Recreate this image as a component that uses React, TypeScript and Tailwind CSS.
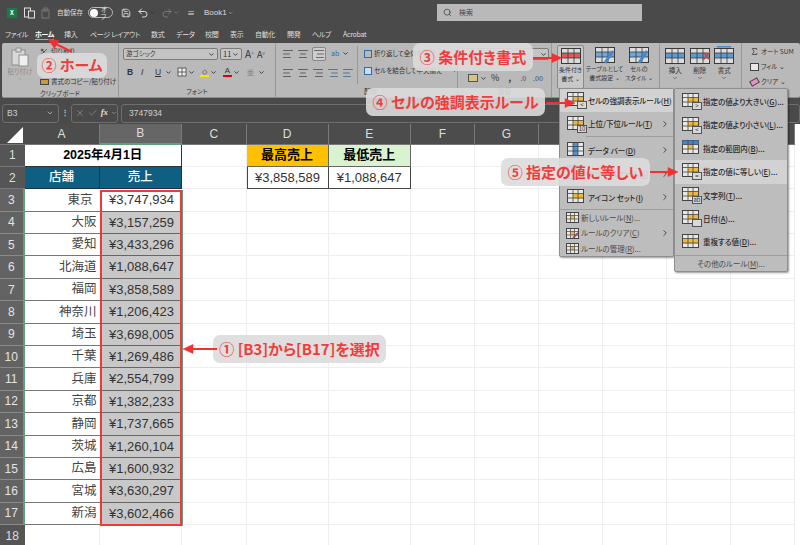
import { AlignCenter, AlignLeft, AlignRight, Check, ChevronDown, ChevronRight, Redo2, Save, Scissors, Search, Sigma, Undo2, X } from "lucide-react";

const rows = [
  ["東京", "¥3,747,934"],
  ["大阪", "¥3,157,259"],
  ["愛知", "¥3,433,296"],
  ["北海道", "¥1,088,647"],
  ["福岡", "¥3,858,589"],
  ["神奈川", "¥1,206,423"],
  ["埼玉", "¥3,698,005"],
  ["千葉", "¥1,269,486"],
  ["兵庫", "¥2,554,799"],
  ["京都", "¥1,382,233"],
  ["静岡", "¥1,737,665"],
  ["茨城", "¥1,260,104"],
  ["広島", "¥1,600,932"],
  ["宮城", "¥3,630,297"],
  ["新潟", "¥3,602,466"],
];

const tabs = [
  ["ファイル", "w-[30px]"],
  ["ホーム", "w-[29px]"],
  ["挿入", "w-[26px]"],
  ["ページ レイアウト", "w-[61px]"],
  ["数式", "w-[25px]"],
  ["データ", "w-[29px]"],
  ["校閲", "w-[25px]"],
  ["表示", "w-[25px]"],
  ["自動化", "w-[32px]"],
  ["開発", "w-[25px]"],
  ["ヘルプ", "w-[31px]"],
  ["Acrobat", "w-[30px]"],
];
const colHeads = ["A", "B", "C", "D", "E", "F", "G", "H", "I", "J", "K"];
const emptyCols = [5, 6, 7, 8, 9, 10];

function TableIcon({ kind = "yellow", tag }: { kind?: string; tag?: string }) {
  return (
    <span className="relative block w-[20px] h-[17px] shrink-0">
      <svg width="17" height="14" viewBox="0 0 17 14">
        <rect x="0.5" y="0.5" width="16" height="13" fill="#e8e8e8" stroke="#444" />
        {kind === "yellow" && <rect x="6" y="4.5" width="10" height="5" fill="#f0b93a" />}
        {kind === "blue" && <rect x="0.5" y="0.5" width="16" height="4" fill="#3c87cf" />}
        {kind === "blue" && <rect x="6" y="5" width="5" height="4" fill="#f0b93a" />}
        {kind === "bars" && <rect x="6" y="1" width="5" height="12" fill="#4d94d4" />}
        {kind === "full" && <rect x="1" y="4.5" width="15" height="5" fill="#f0b93a" />}
        <path d="M6 0.5V13.5M11 0.5V13.5M0.5 4.5H16.5M0.5 9H16.5" stroke="#444" strokeWidth="0.8" />
      </svg>
      {tag !== undefined && (
        <span className="absolute right-0 bottom-0 w-[10px] h-[8px] bg-[#d8d8d8] border border-[#555] text-[6px] leading-[6px] text-center text-[#333]">{tag}</span>
      )}
    </span>
  );
}

function SmallTable({ mark }: { mark?: string }) {
  return (
    <svg width="13" height="11" viewBox="0 0 13 11" className="block">
      <rect x="0.5" y="0.5" width="12" height="10" fill="#e8e8e8" stroke="#444" />
      <rect x="4.5" y="3.5" width="4" height="3.5" fill="#f0b93a" />
      <path d="M4.5 0.5V10.5M8.5 0.5V10.5M0.5 3.5H12.5M0.5 7H12.5" stroke="#444" strokeWidth="0.7" />
      {mark === "clear" && <path d="M7 10L12 5" stroke="#b0408a" strokeWidth="2" />}
    </svg>
  );
}

function RibbonIcon({ fill, mark }: { fill: string; mark?: string }) {
  return (
    <svg width="24" height="20" viewBox="0 0 24 20">
      <rect x="2.5" y="2.5" width="19" height="15" fill="#dcdcdc" stroke="#3a3a3a" />
      <rect x="3" y="7" width="18" height="5" fill={fill} />
      <path d="M9 2.5V17.5M15 2.5V17.5M2.5 7H21.5M2.5 12H21.5" stroke="#3a3a3a" strokeWidth="0.8" />
      {mark === "brush" && <path d="M12 18L20 6" stroke="#4a86c8" strokeWidth="3" />}
      {mark === "cross" && <path d="M15 6L22 14M22 6L15 14" stroke="#c8483c" strokeWidth="1.6" />}
      {mark === "line" && <path d="M5 0.8H19" stroke="#3c87cf" strokeWidth="1.4" />}
    </svg>
  );
}

function MenuItem({ icon, label, hot, rest = "", arrow, active }: { icon: React.ReactNode; label: string; hot: string; rest?: string; arrow?: boolean; active?: boolean }) {
  return (
    <div className={`flex items-center pl-[7px] h-[23.4px] shrink-0 ${active ? "bg-[#d2d2d2]" : ""}`}>
      <span className="w-[21px] shrink-0">{icon}</span>
      <span className="text-[7.5px] font-medium text-[#2b2b2b] whitespace-nowrap">
        {label}(<span className="underline">{hot}</span>){rest}
      </span>
      {arrow && <ChevronRight className="ml-auto mr-[3px] text-[#333]" size={10} />}
    </div>
  );
}

function SmallMenuItem({ mark, label, hot, rest = "", arrow }: { mark?: string; label: string; hot: string; rest?: string; arrow?: boolean }) {
  return (
    <div className="flex items-center pl-[6px] h-[15.4px] shrink-0">
      <span className="w-[15px] shrink-0"><SmallTable mark={mark} /></span>
      <span className="text-[7.5px] text-[#4a4a4a] whitespace-nowrap">
        {label}(<span className="underline">{hot}</span>){rest}
      </span>
      {arrow && <ChevronRight className="ml-auto mr-[3px] text-[#333]" size={10} />}
    </div>
  );
}

function Pill({ className, children }: { className: string; children: React.ReactNode }) {
  return (
    <div className={`absolute flex items-center justify-center rounded-[7px] bg-[#dcdcdc]/90 text-[15px] font-bold text-[#f23c3c] whitespace-nowrap ${className}`}>
      {children}
    </div>
  );
}

function Caret() {
  return <ChevronDown size={7} className="text-[#333] shrink-0" strokeWidth={3} />;
}

export default function App() {
  return (
    <div className="relative w-[800px] h-[545px] overflow-hidden bg-[#4a4a4a] flex flex-col [font-feature-settings:'palt'] font-['Noto_Sans_CJK_JP','Noto_Sans',sans-serif]">
      {/* title bar */}
      <div className="h-[25px] shrink-0 flex items-center text-[#dddddd] pl-[7px]">
        <span className="w-[10px] h-[10px] bg-[#1d7a45] text-white text-[6px] leading-[10px] text-center font-bold shrink-0">X</span>
        <svg width="11" height="12" viewBox="0 0 11 12" className="ml-[7px] shrink-0" fill="none" stroke="#e0e0e0">
          <rect x="0.5" y="1" width="6" height="9" />
          <rect x="4.5" y="4" width="6" height="7" fill="#4a4a4a" />
        </svg>
        <svg width="10" height="12" viewBox="0 0 10 12" className="ml-[6px] shrink-0" fill="none" stroke="#777">
          <rect x="1" y="3" width="7" height="8" />
          <rect x="3" y="1" width="3" height="3" />
        </svg>
        <span className="ml-[6px] text-[6.5px] w-[26px] shrink-0 whitespace-nowrap">自動保存</span>
        <span className="ml-[5px] w-[25px] h-[11px] shrink-0 rounded-full border border-[#bbb] flex items-center pl-[1px]">
          <span className="w-[8px] h-[8px] rounded-full bg-white" />
          <span className="ml-[3px] text-[6.5px] leading-none">オフ</span>
        </span>
        <Save size={10} className="ml-[8px] shrink-0" />
        <Undo2 size={12} className="ml-[6px] shrink-0" />
        <Caret />
        <Redo2 size={12} className="ml-[5px] shrink-0 text-[#777]" />
        <ChevronDown size={7} className="text-[#777] shrink-0" strokeWidth={3} />
        <span className="ml-[7px] text-[8px] leading-none w-[5px]">≡</span>
        <span className="ml-[12px] w-[29px] shrink-0 text-[8px] flex items-center gap-[1px] font-['Liberation_Sans',sans-serif]">
          Book1 <ChevronDown size={8} />
        </span>
        <div className="ml-[204px] w-[205px] h-[17px] shrink-0 bg-[#b9b9b9] flex items-center pl-[6px] text-[#444] mb-[1px]">
          <Search size={9} />
          <span className="ml-[7px] text-[7px]">検索</span>
        </div>
      </div>

      {/* tabs */}
      <div className="h-[18px] shrink-0 flex items-center pl-[5px] text-[7px] tracking-[-0.3px] text-[#dedede]">
        {tabs.map(([t, w]) => (
          <div key={t} className={`shrink-0 ${w}`}>
            <span className={`whitespace-nowrap ${t === "ホーム" ? "font-bold text-white border-b border-[#8cc0a5]" : ""}`}>{t}</span>
          </div>
        ))}
      </div>

      {/* ribbon */}
      <div className="h-[55px] shrink-0 ml-[2px] rounded-[2px] bg-[#b9b9b9] flex text-[#333] border-b border-[#8e8e8e]">
        <div className="relative w-[117px] shrink-0 border-r border-[#989898] flex flex-col">
          <div className="flex-1 flex">
            <div className="w-[36px] shrink-0 flex flex-col items-center pt-[4px] text-[#8b8b8b]">
              <svg width="20" height="20" viewBox="0 0 20 20" fill="#d8d8d8" stroke="#8f8f8f">
                <rect x="2" y="3" width="13" height="15" />
                <rect x="6" y="1" width="5" height="4" />
                <rect x="9" y="8" width="9" height="11" fill="#efefef" />
              </svg>
              <span className="text-[6.5px] leading-[9px] whitespace-nowrap">貼り付け</span>
              <ChevronDown size={6} />
            </div>
            <div className="ml-[2px] flex flex-col pt-[1px] text-[6.5px] leading-[15px]">
              <span className="flex items-center gap-[3px] whitespace-nowrap"><Scissors size={8} />切り取り</span>
              <span className="flex items-center gap-[3px] whitespace-nowrap pl-[11px]">コピー</span>
              <span className="flex items-center gap-[2px] whitespace-nowrap"><span className="w-[9px] h-[6px] shrink-0 bg-[#c89a3c] border border-[#444]" />書式のコピー/貼り付け</span>
            </div>
          </div>
          <div className="h-[10px] text-center text-[6.5px] leading-[8px]">クリップボード</div>
        </div>

        <div className="w-[157px] shrink-0 border-r border-[#989898] flex flex-col">
          <div className="flex items-center pl-[4px] pt-[5px]">
            <div className="w-[95px] h-[12px] border border-[#7c7c7c] rounded-[2px] bg-[#c4c4c4] flex items-center justify-between px-[2px] text-[6.5px]">游ゴシック<Caret /></div>
            <div className="ml-[2px] w-[22px] h-[12px] border border-[#7c7c7c] rounded-[2px] bg-[#c4c4c4] flex items-center justify-between px-[2px] text-[7.5px]">11<Caret /></div>
            <span className="ml-[3px] text-[10px] leading-none">A<sup className="text-[5px] text-[#2f6ea8]">^</sup></span>
            <span className="ml-[3px] text-[9px] leading-none">A<sup className="text-[5px] text-[#2f6ea8]">v</sup></span>
          </div>
          <div className="flex items-center pl-[8px] pt-[7px] text-[8.5px] leading-none font-['Liberation_Sans',sans-serif]">
            <b className="w-[14px]">B</b>
            <i className="w-[14px]">I</i>
            <u className="w-[10px]">U</u>
            <Caret />
            <svg width="10" height="10" viewBox="0 0 10 10" className="ml-[5px]" fill="#eee" stroke="#444" strokeWidth="0.8">
              <rect x="1" y="1" width="8" height="8" />
              <path d="M5 1V9M1 5H9" />
            </svg>
            <span className="ml-[1px]"><Caret /></span>
            <span className="ml-[5px] w-[9px] border-b-2 border-[#f5e600] text-center text-[7px]">◇</span>
            <span className="ml-[1px]"><Caret /></span>
            <span className="ml-[6px] w-[9px] border-b-2 border-[#e00000] text-center text-[8px]">A</span>
            <span className="ml-[1px]"><Caret /></span>
            <span className="ml-[7px] text-[7px] text-[#777]">亜</span>
            <span className="ml-[4px]"><Caret /></span>
          </div>
          <div className="mt-auto h-[10px] text-center text-[6.5px] leading-[8px]">フォント</div>
        </div>

        <div className="w-[182px] shrink-0 border-r border-[#989898] flex flex-col">
          <div className="flex-1 flex">
            <div className="w-[81px] shrink-0 pl-[6px] pt-[3px] flex flex-col gap-[5px]">
              <div className="flex items-center gap-[3px] h-[15px]">
                <AlignLeft size={12} strokeWidth={1.3} />
                <AlignCenter size={12} strokeWidth={1.3} />
                <span className="border border-[#888] bg-[#cdcdcd] rounded-[2px]"><AlignRight size={12} strokeWidth={1.3} /></span>
                <span className="ml-[2px] text-[7px] text-[#2f6ea8]">ab</span>
                <Caret />
              </div>
              <div className="flex items-center gap-[3px] h-[14px]">
                <AlignLeft size={12} strokeWidth={1.3} />
                <AlignCenter size={12} strokeWidth={1.3} />
                <AlignRight size={12} strokeWidth={1.3} />
                <AlignRight size={12} strokeWidth={1.3} className="text-[#24527e]" />
                <AlignLeft size={12} strokeWidth={1.3} className="text-[#24527e]" />
              </div>
            </div>
            <div className="border-l border-[#989898] my-[3px] pl-[6px] text-[6.5px] flex flex-col pt-[3px] gap-[7px] whitespace-nowrap">
              <span className="flex items-center gap-[2px]"><span className="w-[8px] h-[8px] border border-[#2f6ea8] shrink-0" />折り返して全体を表示</span>
              <span className="flex items-center gap-[2px]"><span className="w-[8px] h-[8px] border border-[#2f6ea8] bg-[#c9ddf0] shrink-0" />セルを結合して中央揃え<span className="ml-[7px]"><Caret /></span></span>
            </div>
          </div>
          <div className="h-[10px] text-[6.5px] leading-[8px] pl-[88px]">配置</div>
        </div>

        <div className="w-[94px] shrink-0 border-r border-[#989898] flex flex-col">
          <div className="ml-[6px] mt-[5px] w-[85px] h-[12px] border border-[#7c7c7c] rounded-[2px] bg-[#c4c4c4] flex items-center justify-end pr-[1px]"><Caret /></div>
          <div className="flex-1 flex items-end pb-[5px] pl-[10px] text-[9px] leading-none">
            <span className="w-[10px] h-[8px] bg-[#d8c47c] border border-[#555]" />
            <span className="ml-[2px]"><Caret /></span>
            <span className="ml-[4px]">%</span>
            <span className="ml-[9px] font-bold">,</span>
            <span className="ml-[9px] text-[7px] text-[#24527e]">.0</span>
            <span className="ml-[7px] text-[7px] text-[#24527e]">.00</span>
          </div>
          <div className="h-[10px] text-center text-[6.5px] leading-[8px]">数値</div>
        </div>

        <div className="w-[108px] shrink-0 border-r border-[#989898] flex items-start text-[6px] leading-[8.5px] text-center pl-[5px] pt-[2px]">
          <div className="w-[27px] h-[44px] shrink-0 border border-[#8a8a8a] rounded-[2px] bg-[#c8c8c8] flex flex-col items-center">
            <RibbonIcon fill="#e05a5a" />
            <span className="whitespace-nowrap">条件付き<br />書式 ⌄</span>
          </div>
          <div className="ml-[1px] w-[39px] shrink-0 flex flex-col items-center">
            <RibbonIcon fill="#6ea7dc" mark="brush" />
            <span className="whitespace-nowrap">テーブルとして<br />書式設定 ⌄</span>
          </div>
          <div className="w-[30px] shrink-0 flex flex-col items-center">
            <RibbonIcon fill="#6ea7dc" mark="brush" />
            <span className="whitespace-nowrap">セルの<br />スタイル ⌄</span>
          </div>
        </div>

        <div className="w-[82px] shrink-0 border-r border-[#989898] flex pl-[3px] pt-[3px] text-[6.5px] leading-[9px] text-center">
          <div className="w-[24.5px] flex flex-col items-center"><RibbonIcon fill="#5b9bd5" /><span>挿入</span><ChevronDown size={6} /></div>
          <div className="w-[24.5px] flex flex-col items-center"><RibbonIcon fill="#5b9bd5" mark="cross" /><span>削除</span><ChevronDown size={6} /></div>
          <div className="w-[24.5px] flex flex-col items-center"><RibbonIcon fill="#5b9bd5" mark="line" /><span>書式</span><ChevronDown size={6} /></div>
        </div>

        <div className="flex-1 pl-[8px] pt-[3px] text-[6.5px] flex flex-col gap-[4px] whitespace-nowrap">
          <span className="flex items-center gap-[2px] h-[11px]"><Sigma size={9} />オート SUM</span>
          <span className="flex items-center gap-[2px] h-[11px]"><span className="w-[9px] h-[8px] bg-[#e8e8e8] border border-[#444]" />フィル ⌄</span>
          <span className="flex items-center gap-[2px] h-[11px]"><span className="w-[9px] h-[6px] bg-[#e493c4] border border-[#444] -rotate-30" />クリア ⌄</span>
        </div>
      </div>

      {/* formula bar */}
      <div className="h-[26px] shrink-0 flex items-center pl-[2px] pt-[4px] text-[#cfcfcf] text-[8.5px] font-['Liberation_Sans',sans-serif]">
        <div className="w-[57px] h-[19px] border border-[#6e6e6e] rounded-[3px] flex items-center justify-between px-[4px]">B3<ChevronDown size={8} /></div>
        <span className="w-[12px] text-center text-[8px] text-[#bbb] font-bold">⋮</span>
        <div className="w-[47px] h-[19px] border border-[#6e6e6e] rounded-[3px] flex items-center pl-[3px] gap-[3px] text-[#8b8b8b]">
          <X size={10} />
          <Check size={10} />
          <i className="text-[#ddd] font-['Liberation_Serif',serif] font-bold text-[9px]">fx</i>
          <ChevronDown size={6} className="text-[#ccc]" />
        </div>
        <div className="ml-[3px] flex-1 h-[19px] border border-[#6e6e6e] rounded-[3px] flex items-center pl-[7px]">3747934</div>
      </div>

      {/* sheet */}
      <div className="flex-1 grid content-start grid-cols-[24.5px_75px_82.5px_64.5px_82px_82.5px_64px_64px_64px_64px_64px_64px] bg-white font-['Liberation_Sans','Noto_Sans_CJK_JP',sans-serif]">
        <div className="h-[20.5px] bg-[#4c4c4c] flex items-end justify-end border-b border-[#777]">
          <div className="w-0 h-0 mr-[2px] mb-[1px] border-l-[16px] border-l-transparent border-b-[16px] border-b-white" />
        </div>
        {colHeads.map((c) => (
          <div key={c} className={`h-[20.5px] flex items-center justify-center text-[12px] text-[#dddddd] border-r border-[#7a7a7a] ${c === "B" ? "bg-[#666666] border-b-2 border-b-[#5f9f7f]" : "bg-[#4c4c4c] border-b border-b-[#777]"}`}>
            {c}
          </div>
        ))}

        <div className="h-[22.4px] bg-[#555] flex items-center justify-center text-[12px] text-[#ddd] border-b border-[#777]">1</div>
        <div className="col-span-2 h-[22.4px] flex items-center justify-center text-[12.5px] font-bold text-black border-b border-r border-[#333]">2025年4月1日</div>
        <div className="h-[22.4px] border-b border-r border-[#eeeeee]" />
        <div className="h-[22.4px] bg-[#ffc000] flex items-center justify-center text-[13px] font-bold text-black border-r border-b border-[#666]">最高売上</div>
        <div className="h-[22.4px] bg-[#d9f2d0] flex items-center justify-center text-[13px] font-bold text-black border-r border-b border-[#666]">最低売上</div>
        {emptyCols.map((c) => <div key={c} className="h-[22.4px] border-b border-r border-[#eeeeee]" />)}

        <div className="h-[22.4px] bg-[#555] flex items-center justify-center text-[12px] text-[#ddd] border-b border-[#777]">2</div>
        <div className="h-[22.4px] bg-[#0f5f82] flex items-center justify-center text-[12.5px] font-medium text-white border-r border-b border-[#1b3344]">店舗</div>
        <div className="h-[22.4px] bg-[#0f5f82] flex items-center justify-center text-[12.5px] font-medium text-white border-r border-b border-[#1b3344]">売上</div>
        <div className="h-[22.4px] border-b border-r border-[#eeeeee]" />
        <div className="h-[22.4px] flex items-center justify-center text-[13px] text-[#333] border border-t-0 border-[#444]">¥3,858,589</div>
        <div className="h-[22.4px] flex items-center justify-center text-[13px] text-[#333] border-b border-r border-[#444]">¥1,088,647</div>
        {emptyCols.map((c) => <div key={c} className="h-[22.4px] border-b border-r border-[#eeeeee]" />)}

        {rows.map(([store, price], i) => (
          <div key={store} className="contents">
            <div className="h-[22.4px] bg-[#636363] flex items-center justify-center text-[12px] text-[#e4e4e4] border-b border-[#8a8a8a] border-r-2 border-r-[#5f9f7f]">{i + 3}</div>
            <div className={`h-[22.4px] flex items-center justify-end text-[12.5px] text-[#444] border-b border-[#777] ${i === 0 ? "pr-[7px]" : "pr-[3px]"}`}>{store}</div>
            <div className={`h-[22.4px] flex items-center justify-end pr-[8px] text-[13px] text-[#333] border-b border-[#666] ${i === 0 ? "bg-white" : "bg-[#c8c8c8]"}`}>{price}</div>
            <div className="h-[22.4px] border-b border-r border-[#eeeeee]" />
            <div className="h-[22.4px] border-b border-r border-[#eeeeee]" />
            <div className="h-[22.4px] border-b border-r border-[#eeeeee]" />
            {emptyCols.map((c) => <div key={c} className="h-[22.4px] border-b border-r border-[#eeeeee]" />)}
          </div>
        ))}

        <div className="h-[22.4px] bg-[#555] flex items-center justify-center text-[12px] text-[#ddd]">18</div>
        {colHeads.map((c) => <div key={c} className="h-[22.4px] border-r border-[#eeeeee]" />)}
      </div>

      {/* selection box */}
      <div className="absolute left-[99.5px] top-[189.5px] w-[82.5px] h-[336.5px] border-2 border-[#f03a3a] pointer-events-none" />
      <div className="absolute left-[182px] top-[189.5px] w-[1px] h-[336px] bg-[#5f9f7f]" />

      {/* conditional format menu */}
      <div className="absolute left-[559px] top-[88px] w-[115px] h-[169px] bg-[#bdbdbd] border border-[#8f8f8f] rounded-[2px] shadow-[1px_1px_2px_rgba(0,0,0,0.4)] flex flex-col">
        <MenuItem active arrow icon={<TableIcon tag="<" />} label="セルの強調表示ルール" hot="H" />
        <MenuItem arrow icon={<TableIcon tag="10" />} label="上位/下位ルール" hot="T" />
        <div className="ml-[26px] border-t border-[#9c9c9c] mb-[2px]" />
        <MenuItem arrow icon={<TableIcon kind="bars" />} label="データ バー" hot="D" />
        <MenuItem arrow icon={<TableIcon kind="blue" />} label="カラー スケール" hot="S" />
        <MenuItem arrow icon={<TableIcon />} label="アイコン セット" hot="I" />
        <div className="border-t border-[#9c9c9c]" />
        <SmallMenuItem label="新しいルール" hot="N" rest="..." />
        <SmallMenuItem arrow mark="clear" label="ルールのクリア" hot="C" />
        <SmallMenuItem label="ルールの管理" hot="R" rest="..." />
      </div>

      {/* highlight rules submenu */}
      <div className="absolute left-[674px] top-[88px] w-[114px] h-[184px] pt-[1px] bg-[#bdbdbd] border border-[#8f8f8f] rounded-[2px] shadow-[1px_1px_2px_rgba(0,0,0,0.4)] flex flex-col">
        <MenuItem icon={<TableIcon tag=">" />} label="指定の値より大きい" hot="G" rest="..." />
        <MenuItem icon={<TableIcon tag="<" />} label="指定の値より小さい" hot="L" rest="..." />
        <MenuItem icon={<TableIcon kind="blue" />} label="指定の範囲内" hot="B" rest="..." />
        <MenuItem active icon={<TableIcon tag="=" />} label="指定の値に等しい" hot="E" rest="..." />
        <MenuItem icon={<TableIcon tag="ab" />} label="文字列" hot="T" rest="..." />
        <MenuItem icon={<TableIcon tag="" />} label="日付" hot="A" rest="..." />
        <MenuItem icon={<TableIcon kind="full" />} label="重複する値" hot="D" rest="..." />
        <div className="border-t border-[#9c9c9c] mt-[1px]" />
        <div className="flex-1 flex items-center justify-center text-[7.5px] text-[#4a4a4a]">その他のルール(<span className="underline">M</span>)...</div>
      </div>

      {/* annotations */}
      <Pill className="left-[213px] top-[335px] w-[173px] h-[28px]">① [B3]から[B17]を選択</Pill>
      <Pill className="left-[37px] top-[53px] w-[70px] h-[25px]">② ホーム</Pill>
      <Pill className="left-[413px] top-[43px] w-[120px] h-[28px]">③ 条件付き書式</Pill>
      <Pill className="left-[366px] top-[88px] w-[179px] h-[28px]">④ セルの強調表示ルール</Pill>
      <Pill className="left-[501px] top-[158px] w-[149px] h-[28px]">⑤ 指定の値に等しい</Pill>

      <svg className="absolute left-0 top-0 pointer-events-none" width="800" height="545" viewBox="0 0 800 545">
        <g fill="#f23030" stroke="#f23030" strokeWidth="2">
          <path d="M217 349H192" />
          <path d="M183 349L193 344.5V353.5Z" strokeWidth="0.5" />
          <path d="M72 52L54 43" />
          <path d="M48 39L59 40.5L54.5 48.5Z" strokeWidth="0.5" />
          <path d="M533 58H553" />
          <path d="M562 58L552 53.5V62.5Z" strokeWidth="0.5" />
          <path d="M546 103H566" />
          <path d="M575 103L565 98.5V107.5Z" strokeWidth="0.5" />
          <path d="M650 172H669" />
          <path d="M678 172L668 167.5V176.5Z" strokeWidth="0.5" />
        </g>
      </svg>
    </div>
  );
}
